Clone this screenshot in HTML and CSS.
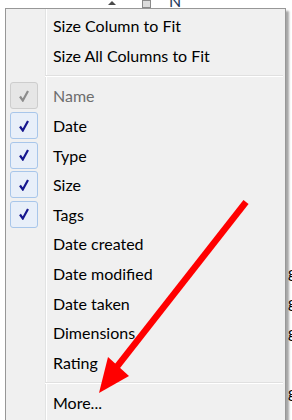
FILE: index.html
```html
<!DOCTYPE html>
<html lang="en">

<head>
    <meta charset="UTF-8">
    <meta name="viewport" content="width=device-width, initial-scale=1.0">
    <title>Column menu</title>
    <link rel="stylesheet" href="styles.css">
</head>

<body>
    <!-- the explorer list that sits behind the popup -->
    <div class="column-header">
        <span class="sort-arrow"></span>
        <span class="header-icon"></span>
        <span class="header-label">N</span>
    </div>
    <div class="file-list">
        <div class="file-row">g</div>
        <div class="file-row">g</div>
        <div class="file-row">g</div>
        <div class="file-row"></div>
        <div class="file-row">g</div>
    </div>

    <ul class="context-menu">
        <li class="menu-item"><span class="check-slot"></span>Size Column to Fit</li>
        <li class="menu-item"><span class="check-slot"></span>Size All Columns to Fit</li>
        <li class="menu-sep"></li>
        <li class="menu-item disabled">
            <span class="check-slot"><span class="check-box grey">
                <svg width="10" height="12" viewBox="0 0 10 12"><path d="M1 6.5 L3.8 10.5 L9 1" /></svg>
            </span></span>Name
        </li>
        <li class="menu-item">
            <span class="check-slot"><span class="check-box">
                <svg width="10" height="12" viewBox="0 0 10 12"><path d="M1 6.5 L3.8 10.5 L9 1" /></svg>
            </span></span>Date
        </li>
        <li class="menu-item">
            <span class="check-slot"><span class="check-box">
                <svg width="10" height="12" viewBox="0 0 10 12"><path d="M1 6.5 L3.8 10.5 L9 1" /></svg>
            </span></span>Type
        </li>
        <li class="menu-item">
            <span class="check-slot"><span class="check-box">
                <svg width="10" height="12" viewBox="0 0 10 12"><path d="M1 6.5 L3.8 10.5 L9 1" /></svg>
            </span></span>Size
        </li>
        <li class="menu-item">
            <span class="check-slot"><span class="check-box">
                <svg width="10" height="12" viewBox="0 0 10 12"><path d="M1 6.5 L3.8 10.5 L9 1" /></svg>
            </span></span>Tags
        </li>
        <li class="menu-item"><span class="check-slot"></span>Date created</li>
        <li class="menu-item"><span class="check-slot"></span>Date modified</li>
        <li class="menu-item"><span class="check-slot"></span>Date taken</li>
        <li class="menu-item"><span class="check-slot"></span>Dimensions</li>
        <li class="menu-item"><span class="check-slot"></span>Rating</li>
        <li class="menu-sep"></li>
        <li class="menu-item"><span class="check-slot"></span>More...</li>
    </ul>

    <svg class="annotation" width="292" height="420" viewBox="0 0 292 420">
        <line x1="246" y1="202" x2="112" y2="373" stroke="#ff0000" stroke-width="6.5" />
        <polygon points="99,393 108,357 129,376" fill="#ff0000" />
    </svg>
</body>

</html>
```

FILE: styles.css
```css
body {
    margin: 0;
    width: 292px;
    height: 420px;
    overflow: hidden;
    position: relative;
    background-color: #fff;
    font-family: Lato, 'Open Sans', sans-serif;
}

.column-header {
    height: 8px;
    display: flex;
    align-items: flex-start;
    padding-left: 108px;
}

.sort-arrow {
    width: 0;
    height: 0;
    margin-top: 1px;
    border-left: 4px solid transparent;
    border-right: 4px solid transparent;
    border-bottom: 4px solid #4a4a4a;
}

.header-icon {
    width: 7px;
    height: 6px;
    margin-left: 26px;
    border: 1px solid #8a8a8a;
    background-color: #dcdcdc;
}

.header-label {
    margin-left: 18px;
    margin-top: -9px;
    font-size: 16px;
    color: #1e395b;
}

.file-list {
    padding-top: 249px;
    padding-left: 288px;
    font-size: 16px;
    color: #000;
}

.file-row {
    height: 30px;
    line-height: 30px;
}

.context-menu {
    position: absolute;
    left: 5px;
    top: 8px;
    width: 279px;
    margin: 0;
    padding: 2px 0;
    list-style: none;
    border: 1px solid #979797;
    background-color: #f0f0f0;
    background-image: linear-gradient(to right, transparent 39px, #e2e3e3 39px, #e2e3e3 40px, #fff 40px, #fff 41px, transparent 41px);
    box-shadow: 3px 3px 2px rgba(0, 0, 0, 0.35);
}

.menu-item {
    display: flex;
    align-items: center;
    height: 29.6px;
    padding-left: 4px;
    font-size: 16px;
    color: #000;
}

.menu-item.disabled {
    color: #6d6d6d;
}

.check-slot {
    width: 28px;
    height: 27px;
    margin-right: 15px;
    flex-shrink: 0;
}

.check-box {
    display: flex;
    align-items: center;
    justify-content: center;
    box-sizing: border-box;
    width: 28px;
    height: 27px;
    border: 1px solid #a8c6ea;
    border-radius: 3px;
    background-color: #e8eff9;
}

.check-box svg path {
    fill: none;
    stroke: #16168e;
    stroke-width: 2.2;
}

.check-box.grey {
    border-color: #cdcdcd;
    background-color: #e6e6e6;
}

.check-box.grey svg path {
    stroke: #8c8c8c;
}

.menu-sep {
    height: 11px;
    margin-left: 39px;
    margin-right: 2px;
    display: flex;
    flex-direction: column;
    justify-content: center;
}

.menu-sep::before {
    content: '';
    display: block;
    border-top: 1px solid #e0e0e0;
    border-bottom: 1px solid #fff;
}

.annotation {
    position: absolute;
    left: 0;
    top: 0;
    pointer-events: none;
}
```
